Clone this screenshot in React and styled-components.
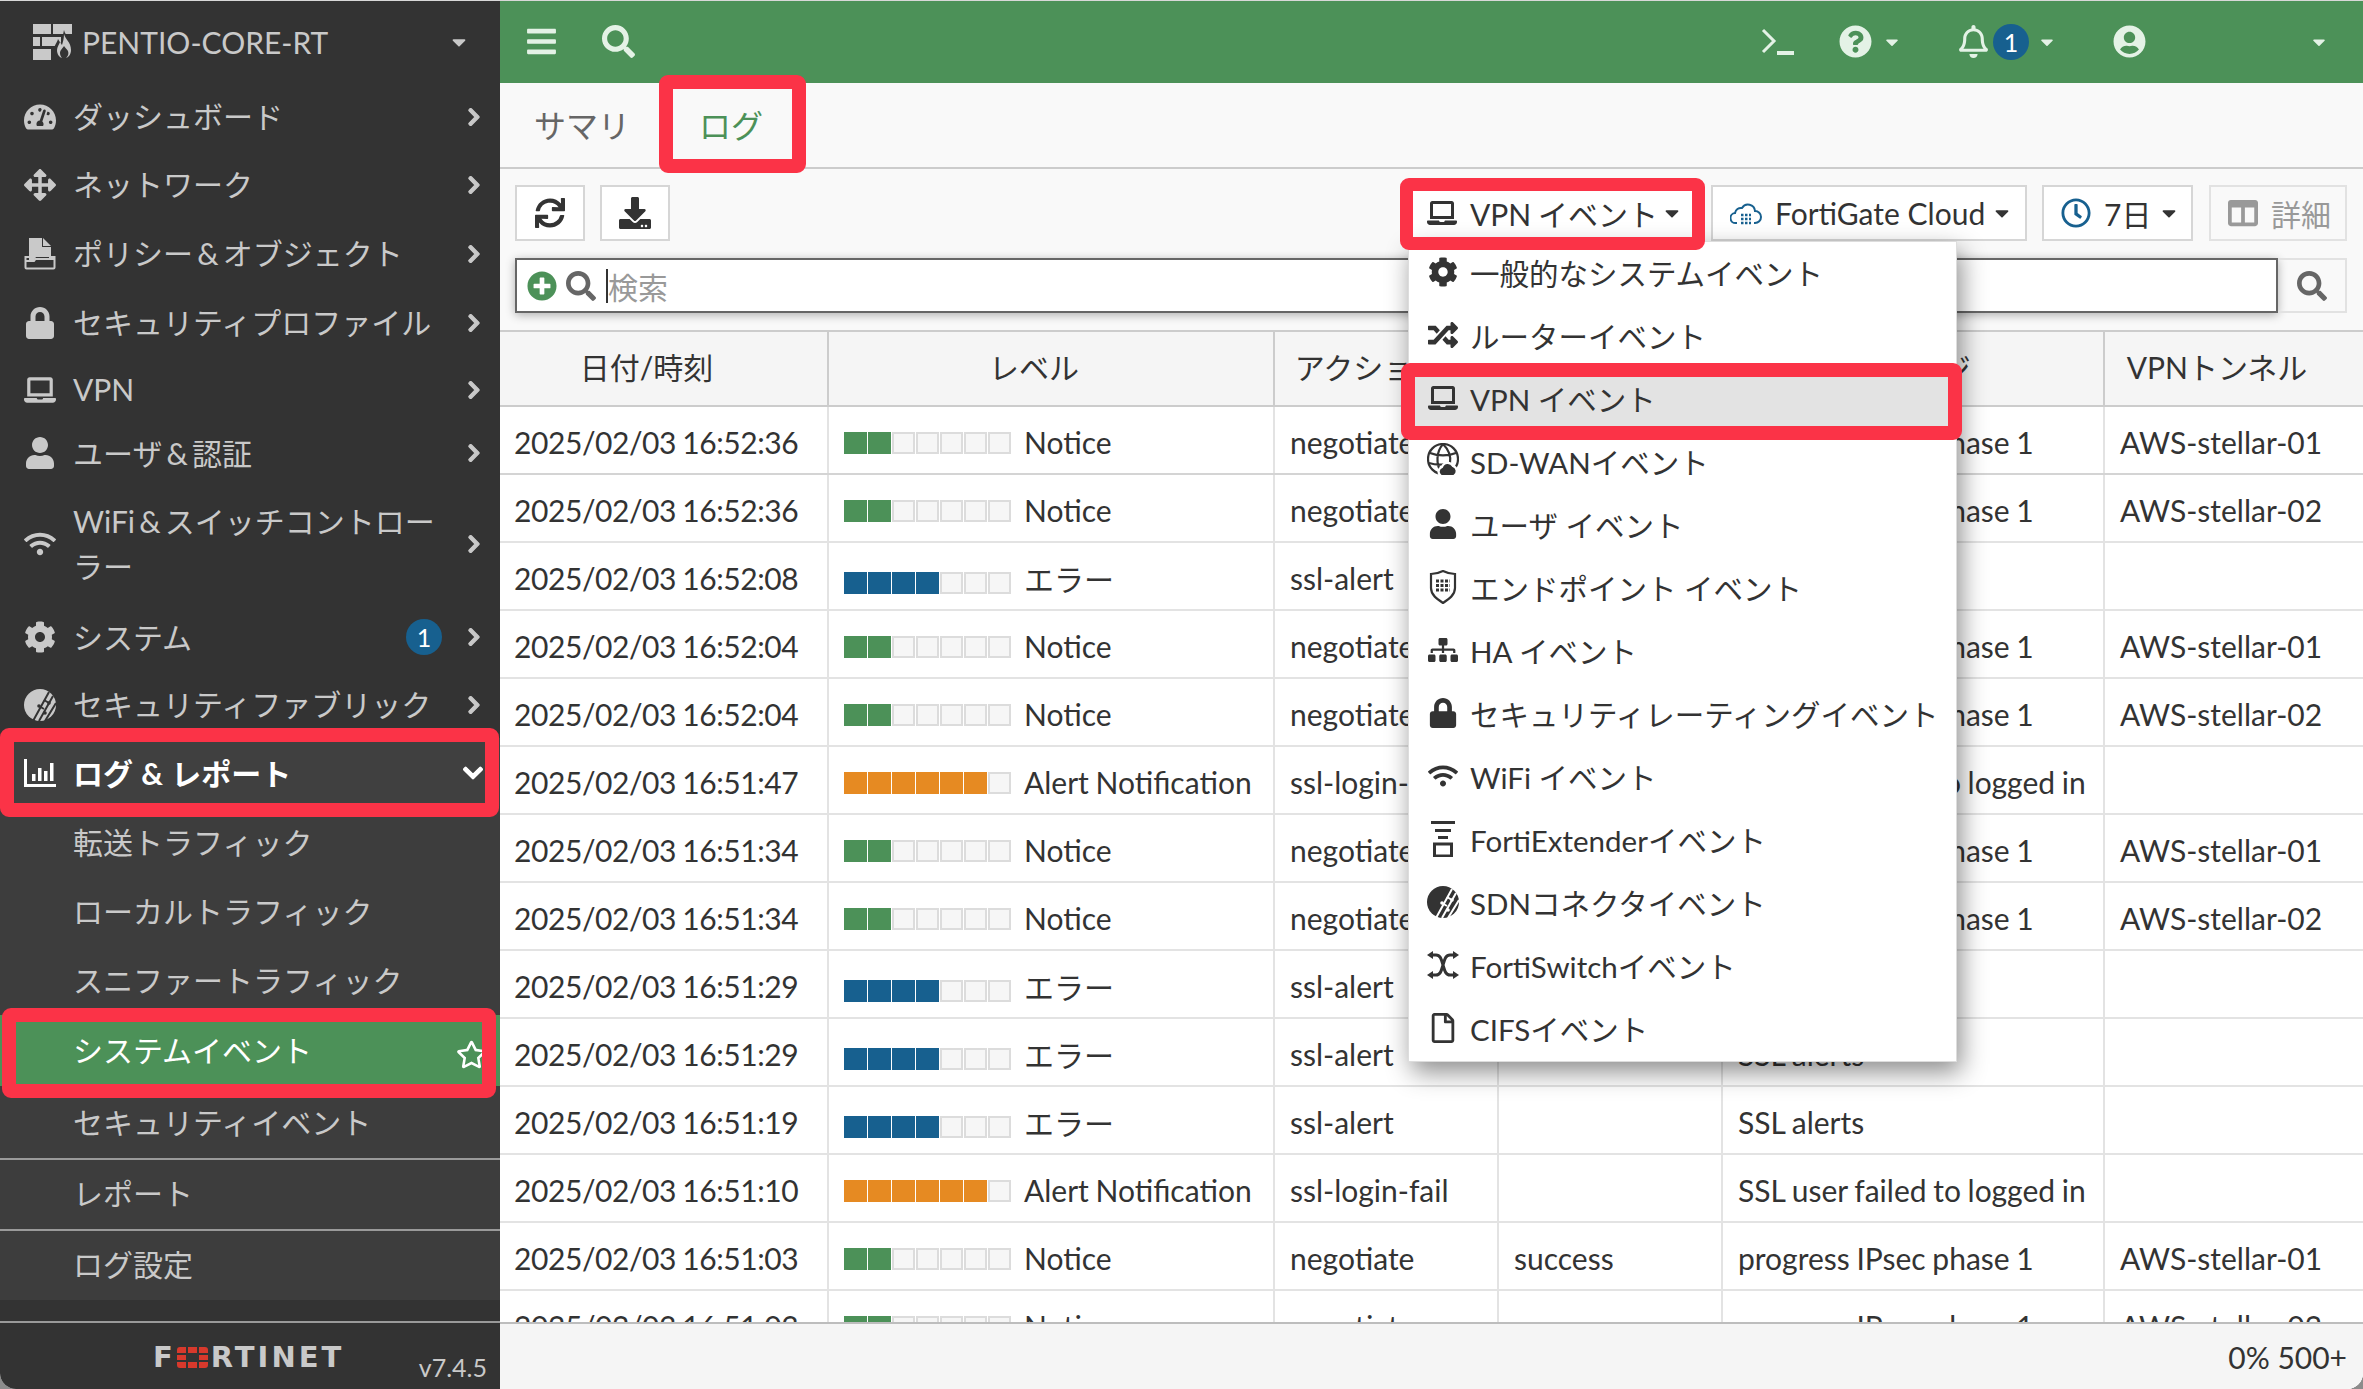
import React from "react";
import styled, { createGlobalStyle } from "styled-components";
import {
  FaArrowsAlt,
  FaBars,
  FaCaretDown,
  FaChevronDown,
  FaChevronRight,
  FaCog,
  FaColumns,
  FaDownload,
  FaLaptop,
  FaLock,
  FaPlusCircle,
  FaQuestionCircle,
  FaRandom,
  FaRegBell,
  FaRegClock,
  FaRegFile,
  FaRegStar,
  FaSearch,
  FaSitemap,
  FaSync,
  FaTachometerAlt,
  FaUser,
  FaUserCircle,
  FaWifi,
} from "react-icons/fa";

const GlobalStyle = createGlobalStyle`
  html, body {
    margin: 0;
    height: 100%;
    overflow: hidden;
    background: #8c8c8c;
  }
  body {
    font-family: Lato, "Noto Sans CJK JP", sans-serif;
    font-size: 30px;
    color: #333;
  }
  * { box-sizing: border-box; }
`;

const Shell = styled.div`
  position: relative;
  display: flex;
  width: 2363px;
  height: 1389px;
  overflow: hidden;
  border-radius: 0 0 16px 16px;
  background: #fff;
  &::after {
    content: "";
    position: absolute;
    inset: 0 0 auto 0;
    height: 1px;
    background: #d8d8d8;
  }
`;

/* sidebar */
const Sidebar = styled.aside`
  display: flex;
  flex-direction: column;
  flex: 0 0 500px;
  background: #333;
  color: #c9c9c9;
`;
const Device = styled.div`
  display: flex;
  align-items: center;
  height: 83px;
  padding: 0 30px 0 33px;
  gap: 8px;
  svg:last-child { margin-left: auto; }
`;
const DeviceName = styled.span`
  font-size: 30px;
`;
const NavItem = styled.div`
  position: relative;
  display: flex;
  align-items: center;
  height: ${(p) => p.$h}px;
  padding: ${(p) => (p.$active ? "2px" : "0")} 16px 0 24px;
  gap: 17px;
  line-height: 45px;
  background: ${(p) => (p.$active ? "#404040" : "transparent")};
  color: ${(p) => (p.$active ? "#fff" : "inherit")};
  font-weight: ${(p) => (p.$active ? 700 : 400)};
  word-spacing: ${(p) => (p.$active ? "1px" : "-3.5px")};
`;
const NavIcon = styled.span`
  display: flex;
  justify-content: center;
  flex: 0 0 32px;
  font-size: 32px;
`;
const NavLabel = styled.span`
  flex: 1;
  min-width: 0;
`;
const Count = styled.span`
  display: flex;
  align-items: center;
  justify-content: center;
  width: 36px;
  height: 36px;
  margin-right: 5px;
  border-radius: 50%;
  background: #17608f;
  color: #fff;
  font-size: 25px;
  line-height: 1;
`;
const Chevron = styled(FaChevronRight)`
  flex: none;
  font-size: 20px;
  stroke: currentColor;
  stroke-width: 30;
`;
const ChevronDown = styled(FaChevronDown)`
  flex: none;
  font-size: 22px;
  stroke: currentColor;
  stroke-width: 30;
`;
const SubNav = styled.div`
  background: #3d3d3d;
  height: 562px;
`;
const SubItem = styled.div`
  position: relative;
  display: flex;
  align-items: center;
  height: ${(p) => p.$h}px;
  padding-left: 73px;
  padding-bottom: ${(p) => p.$lift || 0}px;
  line-height: 45px;
  background: ${(p) => (p.$active ? "#4c9158" : "transparent")};
  color: ${(p) => (p.$active ? "#fff" : "inherit")};
  border-bottom: ${(p) => (p.$line ? "2px solid #9a9a9a" : "0")};
`;
const Star = styled(FaRegStar)`
  position: absolute;
  right: 13px;
  top: 24px;
  font-size: 31px;
`;
const SideFooter = styled.div`
  display: flex;
  align-items: center;
  margin-top: 21px;
  height: 68px;
  border-top: 2px solid #9a9a9a;
  padding-left: 153px;
  position: relative;
`;
const Logo = styled.div`
  display: flex;
  align-items: center;
  padding-top: 2px;
  font-family: "DejaVu Sans", sans-serif;
  font-weight: 700;
  font-size: 29px;
  letter-spacing: 3px;
  line-height: 1;
  color: #c9c9c9;
  svg { margin: 0 3px 0 1px; }
`;
const Version = styled.span`
  margin-left: auto;
  padding: 22px 13px 0 0;
  font-size: 25px;
`;

/* marker boxes drawn on top of the shot */
const Marker = styled.span`
  position: absolute;
  z-index: 30;
  top: ${(p) => p.$t}px;
  right: ${(p) => p.$r}px;
  bottom: ${(p) => p.$b}px;
  left: ${(p) => p.$l}px;
  border: ${(p) => p.$w || 14}px solid #fb3347;
  border-radius: 9px;
  pointer-events: none;
`;

/* main */
const Main = styled.main`
  display: flex;
  flex-direction: column;
  flex: 1;
  min-width: 0;
  background: #f9f9f9;
`;
const TopBar = styled.header`
  display: flex;
  align-items: center;
  flex: 0 0 83px;
  padding: 0 34px 0 25px;
  background: #4c9158;
  color: #e4f2e6;
`;
const TopIcon = styled.span`
  display: flex;
  align-items: center;
  margin-left: ${(p) => p.$ml || 0}px;
  font-size: ${(p) => p.$size || 33}px;
`;
const TopCount = styled.span`
  display: flex;
  align-items: center;
  justify-content: center;
  width: 36px;
  height: 36px;
  margin-left: 3.5px;
  border-radius: 50%;
  background: #17608f;
  color: #fff;
  font-size: 25px;
`;
const Spacer = styled.div`
  flex: 1;
`;
const TabBar = styled.nav`
  display: flex;
  align-items: center;
  flex: 0 0 86px;
  gap: 69px;
  padding-left: 34px;
  border-bottom: 2px solid #ccc;
`;
const Tab = styled.div`
  position: relative;
  color: ${(p) => (p.$on ? "#4c9158" : "#666")};
  font-size: 32px;
  line-height: 81px;
`;
const ToolBar = styled.div`
  display: flex;
  align-items: flex-start;
  flex: 0 0 73px;
  padding: 16px 16px 0 15px;
`;
const ToolButton = styled.div`
  position: relative;
  display: flex;
  align-items: center;
  justify-content: ${(p) => (p.$w ? "flex-start" : "center")};
  flex: none;
  width: ${(p) => p.$w || 70}px;
  height: 56px;
  margin-left: ${(p) => p.$ml || 0}px;
  padding-left: ${(p) => (p.$w ? 17 : 0)}px;
  border: 2px solid ${(p) => (p.$off ? "#e2e2e2" : "#d6d6d6")};
  background: ${(p) => (p.$off ? "#f9f9f9" : "#fff")};
  color: ${(p) => (p.$off ? "#999" : "#333")};
  white-space: nowrap;
  svg { flex: none; }
  > svg:first-child { margin-right: ${(p) => (p.$w ? 13 : 0)}px; }
`;
const Caret = styled(FaCaretDown)`
  margin-left: auto;
  margin-right: ${(p) => p.$mr}px;
  font-size: 22px;
`;
const ButtonText = styled.span`
  word-spacing: -1px;
`;
const SearchRow = styled.div`
  display: flex;
  flex: 0 0 88px;
  padding: 16px 16px 17px 15px;
`;
const SearchBox = styled.div`
  display: flex;
  align-items: center;
  flex: 1;
  padding-left: 10px;
  gap: 9px;
  background: #fff;
  border: 2px solid #666;
  box-shadow: 0 2px 9px rgba(0, 0, 0, 0.3);
`;
const Cursor = styled.span`
  display: block;
  margin-left: 1px;
  margin-right: -9px;
  width: 2px;
  height: 34px;
  background: #333;
`;
const Placeholder = styled.span`
  color: #999;
`;
const SearchGo = styled.div`
  display: flex;
  align-items: center;
  justify-content: center;
  width: 69px;
  border: 2px solid #e2e2e2;
  border-left: 0;
  color: #666;
  font-size: 30px;
`;

/* table */
const Table = styled.div`
  flex: 1;
  min-height: 0;
  overflow: hidden;
  background: #fff;
`;
const Row = styled.div`
  display: grid;
  grid-template-columns: 329px 446px 224px 224px 382px 258px;
  height: 68px;
  border-bottom: 2px solid ${(p) => (p.$first ? "#d4d4d4" : "#e3e3e3")};
`;
const HeadRow = styled(Row)`
  height: 77px;
  background: #f5f5f5;
  border-top: 2px solid #ccc;
  border-bottom: 2px solid #ccc;
`;
const HeadCell = styled.div`
  display: flex;
  align-items: center;
  justify-content: center;
  padding: 0 34px 6px 0;
  border-right: 2px solid #ccc;
  white-space: nowrap;
  &:last-child { border-right: 0; }
`;
const Cell = styled.div`
  display: flex;
  align-items: center;
  padding: 4px 0 0 15px;
  border-right: 2px solid #e3e3e3;
  white-space: nowrap;
  word-spacing: -1px;
  &:last-child { border-right: 0; }
`;
const DateCell = styled(Cell)`
  padding-left: 14px;
  letter-spacing: -0.43px;
`;
const Bars = styled.span`
  display: flex;
  gap: 1px;
  margin-right: 13px;
  margin-top: ${(p) => (p.$low ? 9 : 2)}px;
`;
const Bar = styled.i`
  display: block;
  width: 23px;
  height: 22px;
  background: ${(p) => p.$color || "#f6f6f6"};
  border: ${(p) => (p.$color ? "0" : "2px solid #dcdcdc")};
`;
const StatusBar = styled.footer`
  display: flex;
  align-items: center;
  justify-content: flex-end;
  flex: 0 0 67px;
  padding-right: 16px;
  background: #f5f5f5;
  border-top: 2px solid #bdbdbd;
`;

/* dropdown */
const Menu = styled.div`
  position: absolute;
  z-index: 20;
  top: 54px;
  left: -2px;
  width: 549px;
  background: #fff;
  border: 1px solid #ddd;
  box-shadow: 4px 10px 24px rgba(0, 0, 0, 0.45);
  font-size: 29.5px;
`;
const MenuItem = styled.div`
  position: relative;
  display: flex;
  align-items: center;
  gap: 11px;
  height: 63px;
  padding: 0 0 3px 18px;
  background: ${(p) => (p.$on ? "#e3e3e3" : "transparent")};
  white-space: nowrap;
`;
const MenuIcon = styled.span`
  display: flex;
  justify-content: center;
  flex: 0 0 32px;
  font-size: 30px;
`;

/* drawn icons, no matching glyph in the packs */
const FirewallIcon = () => (
  <svg width="41" height="36" viewBox="0 0 41 36" fill="#c9c9c9">
    <rect x="0" y="0" width="18" height="10" />
    <rect x="20" y="0" width="19" height="10" />
    <rect x="0" y="13" width="7" height="9" />
    <rect x="9" y="13" width="19" height="9" />
    <rect x="0" y="25" width="18" height="11" />
    <path
      d="M31 6c1 6 9 10 9 20a9.500 9.500 0 0 1-19 0c0-5 3-7 4-11 1 2 2 3 3 4 1-4 2-8 3-13z"
      fill="#333"
    />
    <path d="M31 10c1 5 7 8 7 16 0 4-2 7-5 8 2-2 3-4 2-7-1-2-3-3-4-5-1 2-4 4-4 7 0 2 1 4 2 5-3-1-5-4-5-8 0-3 2-5 3-8 1 1 1 2 2 3 1-3 2-7 2-11z" />
  </svg>
);

const PolicyIcon = () => (
  <svg width="32" height="32" viewBox="0 0 32 32" fill="currentColor">
    <path d="M5 0h13v9h9v10H12l-2 3H5z" />
    <path d="M19 0l8 8h-8z" />
    <path
      d="M8 19H1.500v10.500a1 1 0 0 0 1 1h27a1 1 0 0 0 1-1V19H25M1.500 23H10l1.500-2H31"
      fill="none"
      stroke="currentColor"
      strokeWidth="2"
    />
  </svg>
);

const FabricIcon = ({ cut }) => (
  <svg width="32" height="32" viewBox="0 0 32 32">
    <circle cx="16" cy="16" r="16" fill="currentColor" />
    <g stroke={cut} strokeWidth="2" fill="none">
      <path d="M9 32L25 3M15 32L29 7M21 32L32 14" />
      <path d="M15 17l5 3M20 11l5 3" />
    </g>
    <g fill={cut}>
      <circle cx="15" cy="17" r="1.800" />
      <circle cx="25" cy="14" r="1.800" />
      <circle cx="21" cy="24" r="1.800" />
    </g>
  </svg>
);

const ReportIcon = () => (
  <svg width="32" height="28" viewBox="0 0 32 28" fill="currentColor">
    <path d="M0 0h3v25h29v3H0z" />
    <rect x="8" y="15" width="3.500" height="7" />
    <rect x="14" y="9" width="3.500" height="13" />
    <rect x="20" y="12" width="3.500" height="10" />
    <rect x="26" y="4" width="3.500" height="18" />
  </svg>
);

const TerminalIcon = () => (
  <svg width="33" height="28" viewBox="0 0 33 28" fill="none" stroke="currentColor" strokeWidth="3">
    <path d="M2 2l11 11L2 24" />
    <path d="M16 25h17" strokeWidth="4" />
  </svg>
);

const CloudIcon = () => (
  <svg width="32" height="30" viewBox="0 0 32 30" fill="none" stroke="#17608f" strokeWidth="2">
    <path d="M7 25H6a5 5 0 0 1-1-10 6 6 0 0 1 7-5 7 7 0 0 1 13 3 6 6 0 0 1 0 12h-1" />
    <path d="M11 17h10M11 21h10M11 25h10" strokeDasharray="2.500 1.500" strokeWidth="2.500" />
  </svg>
);

const GlobeCloudIcon = () => (
  <svg width="32" height="36" viewBox="0 0 32 36" fill="none" stroke="currentColor" strokeWidth="2.200">
    <circle cx="16" cy="16" r="15" />
    <path d="M3 10c8 3 18 3 26 0M2 20c7 2 11 2 16 1M16 1c-7 8-7 20-2 28M16 1c6 6 8 13 7 19" />
    <path
      d="M14 33a5 5 0 0 1 1-9 6 6 0 0 1 11-1 5.500 5.500 0 0 1 1 10z"
      fill="currentColor"
      stroke="#fff"
    />
  </svg>
);

const ShieldIcon = () => (
  <svg width="28" height="34" viewBox="0 0 28 34" fill="none" stroke="currentColor" strokeWidth="2.200">
    <path d="M2 4c4 0 8-1 12-3 4 2 8 3 12 3v14c0 7-6 11-12 15C8 29 2 25 2 18z" />
    <path d="M7 11h14M7 15.500h14M7 20h14" strokeDasharray="3 1.500" strokeWidth="3" />
  </svg>
);

const ExtenderIcon = () => (
  <svg width="26" height="36" viewBox="0 0 26 36" fill="currentColor">
    <rect x="1" y="0" width="24" height="3" />
    <rect x="5" y="8" width="16" height="3" />
    <rect x="8" y="15" width="10" height="3" />
    <rect x="4.500" y="23" width="17" height="12" fill="none" stroke="currentColor" strokeWidth="3" />
  </svg>
);

const SwitchIcon = () => (
  <svg width="32" height="28" viewBox="0 0 32 28" fill="none" stroke="currentColor" strokeWidth="3">
    <path d="M3 4h6c4 0 5 3 7 10s3 10 7 10h6M3 24h6c4 0 5-3 7-10s3-10 7-10h6" />
    <path d="M26 0l6 4-6 4zM26 20l6 4-6 4zM6 0L0 4l6 4zM6 20l-6 4 6 4z" fill="currentColor" stroke="none" />
  </svg>
);

const FortinetMark = () => (
  <svg width="31" height="21" viewBox="0 0 31 21" fill="#d8392c">
    <path d="M3 0h6v6H0V3a3 3 0 0 1 3-3zM11 0h9v6h-9zM22 0h6a3 3 0 0 1 3 3v3h-9z" />
    <path d="M0 8h9v5H0zM22 8h9v5h-9z" />
    <path d="M0 15h9v6H3a3 3 0 0 1-3-3zM11 15h9v6h-9zM22 15h9v3a3 3 0 0 1-3 3h-6z" />
  </svg>
);

const LEVELS = {
  notice: { filled: 2, color: "#4c9158", label: "Notice" },
  error: { filled: 4, color: "#17608f", label: "エラー", low: true },
  alert: { filled: 6, color: "#e68a22", label: "Alert Notification" },
};

const IPSEC = "progress IPsec phase 1";
const ROWS = [
  ["16:52:36", "notice", "negotiate", "success", IPSEC, "AWS-stellar-01"],
  ["16:52:36", "notice", "negotiate", "success", IPSEC, "AWS-stellar-02"],
  ["16:52:08", "error", "ssl-alert", "", "SSL alerts", ""],
  ["16:52:04", "notice", "negotiate", "success", IPSEC, "AWS-stellar-01"],
  ["16:52:04", "notice", "negotiate", "success", IPSEC, "AWS-stellar-02"],
  ["16:51:47", "alert", "ssl-login-fail", "", "SSL user failed to logged in", ""],
  ["16:51:34", "notice", "negotiate", "success", IPSEC, "AWS-stellar-01"],
  ["16:51:34", "notice", "negotiate", "success", IPSEC, "AWS-stellar-02"],
  ["16:51:29", "error", "ssl-alert", "", "SSL alerts", ""],
  ["16:51:29", "error", "ssl-alert", "", "SSL alerts", ""],
  ["16:51:19", "error", "ssl-alert", "", "SSL alerts", ""],
  ["16:51:10", "alert", "ssl-login-fail", "", "SSL user failed to logged in", ""],
  ["16:51:03", "notice", "negotiate", "success", IPSEC, "AWS-stellar-01"],
  ["16:51:03", "notice", "negotiate", "success", IPSEC, "AWS-stellar-02"],
];

const HEADS = ["日付/時刻", "レベル", "アクション", "ステータス", "メッセージ", "VPNトンネル"];

const NAV = [
  { icon: <FaTachometerAlt />, label: "ダッシュボード", h: 67 },
  { icon: <FaArrowsAlt />, label: "ネットワーク", h: 69 },
  { icon: <PolicyIcon />, label: "ポリシー & オブジェクト", h: 69 },
  { icon: <FaLock />, label: "セキュリティプロファイル", h: 69 },
  { icon: <FaLaptop />, label: "VPN", h: 65 },
  { icon: <FaUser />, label: "ユーザ & 認証", h: 62 },
  { icon: <FaWifi />, label: "WiFi & スイッチコントローラー", h: 119 },
  { icon: <FaCog />, label: "システム", h: 68, count: 1 },
  { icon: <FabricIcon cut="#333" />, label: "セキュリティファブリック", h: 67 },
];

const SUB = [
  { label: "転送トラフィック", h: 72 },
  { label: "ローカルトラフィック", h: 67 },
  { label: "スニファートラフィック", h: 70 },
  { label: "システムイベント", h: 71, active: true },
  { label: "セキュリティイベント", h: 74, line: true },
  { label: "レポート", h: 71, line: true, lift: 3 },
  { label: "ログ設定", h: 69, lift: 3 },
];

const EVENTS = [
  { icon: <FaCog />, label: "一般的なシステムイベント" },
  { icon: <FaRandom />, label: "ルーターイベント" },
  { icon: <FaLaptop />, label: "VPN イベント", on: true },
  { icon: <GlobeCloudIcon />, label: "SD-WANイベント" },
  { icon: <FaUser />, label: "ユーザ イベント" },
  { icon: <ShieldIcon />, label: "エンドポイント イベント" },
  { icon: <FaSitemap />, label: "HA イベント" },
  { icon: <FaLock />, label: "セキュリティレーティングイベント" },
  { icon: <FaWifi />, label: "WiFi イベント" },
  { icon: <ExtenderIcon />, label: "FortiExtenderイベント" },
  { icon: <FabricIcon cut="#fff" />, label: "SDNコネクタイベント" },
  { icon: <SwitchIcon />, label: "FortiSwitchイベント" },
  { icon: <FaRegFile />, label: "CIFSイベント" },
];

function Level({ kind }) {
  const { filled, color, label, low } = LEVELS[kind];
  return (
    <>
      <Bars $low={low}>
        {Array.from({ length: 7 }, (_, i) => (
          <Bar key={i} $color={i < filled ? color : undefined} />
        ))}
      </Bars>
      {label}
    </>
  );
}

export default function App() {
  return (
    <Shell>
      <GlobalStyle />
      <Sidebar>
        <Device>
          <FirewallIcon />
          <DeviceName>PENTIO-CORE-RT</DeviceName>
          <FaCaretDown size={22} />
        </Device>
        {NAV.map((item) => (
          <NavItem key={item.label} $h={item.h}>
            <NavIcon>{item.icon}</NavIcon>
            <NavLabel>{item.label}</NavLabel>
            {item.count && <Count>{item.count}</Count>}
            <Chevron />
          </NavItem>
        ))}
        <SubNav>
          <NavItem $h={68} $active>
            <NavIcon>
              <ReportIcon />
            </NavIcon>
            <NavLabel>ログ & レポート</NavLabel>
            <ChevronDown />
            <Marker $t={-10} $b={-11} $l={0} $r={1} />
          </NavItem>
          {SUB.map((item) => (
            <SubItem
              key={item.label}
              $h={item.h}
              $active={item.active}
              $line={item.line}
              $lift={item.lift}
            >
              {item.label}
              {item.active && <Star />}
              {item.active && <Marker $t={-7} $b={-12} $l={2} $r={4} />}
            </SubItem>
          ))}
        </SubNav>
        <SideFooter>
          <Logo>
            F
            <FortinetMark />
            RTINET
          </Logo>
          <Version>v7.4.5</Version>
        </SideFooter>
      </Sidebar>
      <Main>
        <TopBar>
          <TopIcon><FaBars /></TopIcon>
          <TopIcon $ml={44}><FaSearch /></TopIcon>
          <Spacer />
          <TopIcon><TerminalIcon /></TopIcon>
          <TopIcon $ml={45}><FaQuestionCircle /></TopIcon>
          <TopIcon $ml={10} $size={20}><FaCaretDown /></TopIcon>
          <TopIcon $ml={55}><FaRegBell /></TopIcon>
          <TopCount>1</TopCount>
          <TopIcon $ml={8} $size={20}><FaCaretDown /></TopIcon>
          <TopIcon $ml={56}><FaUserCircle /></TopIcon>
          <TopIcon $ml={163} $size={20}><FaCaretDown /></TopIcon>
        </TopBar>
        <TabBar>
          <Tab>サマリ</Tab>
          <Tab $on>
            ログ
            <Marker $t={-10} $b={-7} $l={-40} $r={-43} />
          </Tab>
        </TabBar>
        <ToolBar>
          <ToolButton><FaSync /></ToolButton>
          <ToolButton $ml={15}><FaDownload size={32} /></ToolButton>
          <Spacer />
          <ToolButton $w={292}>
            <FaLaptop />
            <ButtonText>VPN イベント</ButtonText>
            <Caret $mr={15} />
            <Marker $t={-9} $b={-11} $l={-10} $r={-7} $w={13} />
            <Menu>
              {EVENTS.map((ev) => (
                <MenuItem key={ev.label} $on={ev.on}>
                  <MenuIcon>{ev.icon}</MenuIcon>
                  {ev.label}
                  {ev.on && <Marker $t={-5} $b={-9} $l={-8} $r={-6} />}
                </MenuItem>
              ))}
            </Menu>
          </ToolButton>
          <ToolButton $w={316} $ml={11}>
            <CloudIcon />
            FortiGate Cloud
            <Caret $mr={12} />
          </ToolButton>
          <ToolButton $w={151} $ml={15}>
            <FaRegClock color="#17608f" />
            7日
            <Caret $mr={11} />
          </ToolButton>
          <ToolButton $w={138} $ml={16} $off>
            <FaColumns />
            詳細
          </ToolButton>
        </ToolBar>
        <SearchRow>
          <SearchBox>
            <FaPlusCircle color="#4c9158" />
            <FaSearch color="#666" />
            <Cursor />
            <Placeholder>検索</Placeholder>
          </SearchBox>
          <SearchGo><FaSearch /></SearchGo>
        </SearchRow>
        <Table>
          <HeadRow>
            {HEADS.map((h) => (
              <HeadCell key={h}>{h}</HeadCell>
            ))}
          </HeadRow>
          {ROWS.map((row, i) => (
            <Row key={i} $first={i === 0}>
              <DateCell>2025/02/03 {row[0]}</DateCell>
              <Cell><Level kind={row[1]} /></Cell>
              <Cell>{row[2]}</Cell>
              <Cell>{row[3]}</Cell>
              <Cell>{row[4]}</Cell>
              <Cell>{row[5]}</Cell>
            </Row>
          ))}
        </Table>
        <StatusBar>0% 500+</StatusBar>
      </Main>
    </Shell>
  );
}
